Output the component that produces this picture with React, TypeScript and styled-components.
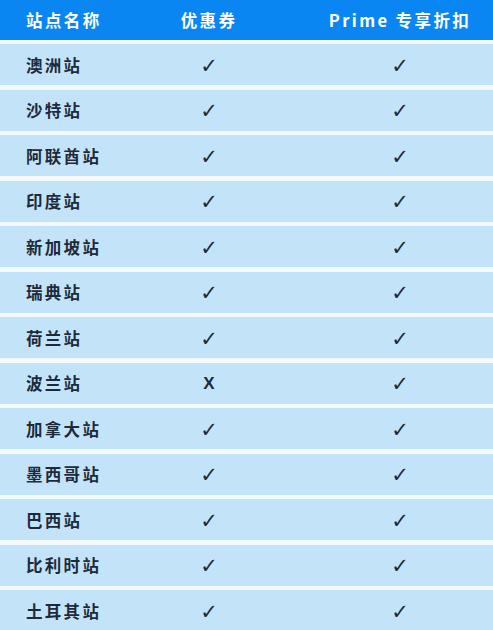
import React from "react";
import styled, { createGlobalStyle } from "styled-components";

const Global = createGlobalStyle`
  html, body { margin: 0; padding: 0; background: #f3f9fe; }
  body { font-family: "Noto Sans CJK SC", "Noto Sans", sans-serif; }
`;

const Table = styled.div`
  width: 493px;
  display: flex;
  flex-direction: column;
  gap: 4.5px;
  background: #f3f9fe;
`;

const HeaderRow = styled.div`
  display: grid;
  grid-template-columns: 111px 196px 1fr;
  align-items: center;
  height: 39.5px;
  background: #0a86f2;
  color: #ffffff;
  font-weight: 700;
  font-size: 16.5px;
  letter-spacing: 2.4px;
`;

const Row = styled.div`
  display: grid;
  grid-template-columns: 111px 196px 1fr;
  align-items: center;
  height: 41px;
  background: #c3e4f8;
  color: #1d2a3a;
`;

const NameCell = styled.div`
  padding-left: 26px;
  font-weight: 700;
  font-size: 16.5px;
  letter-spacing: 2.3px;
  white-space: nowrap;
`;

const HeadCell = styled.div<{ $align?: string }>`
  text-align: ${(p) => p.$align || "center"};
  padding-left: ${(p) => (p.$align === "left" ? "26px" : "0")};
  white-space: nowrap;
  line-height: 1;
`;

const Mark = styled.div<{ $no?: boolean }>`
  text-align: center;
  font-family: ${(p) => (p.$no ? '"Liberation Sans", sans-serif' : '"DejaVu Sans", sans-serif')};
  font-weight: ${(p) => (p.$no ? 700 : 400)};
  font-size: ${(p) => (p.$no ? "17px" : "21px")};
  padding-top: ${(p) => (p.$no ? "1px" : "3px")};
  color: #1d2a3a;
  line-height: 1;
`;

const rows: [string, boolean, boolean][] = [
  ["澳洲站", true, true],
  ["沙特站", true, true],
  ["阿联酋站", true, true],
  ["印度站", true, true],
  ["新加坡站", true, true],
  ["瑞典站", true, true],
  ["荷兰站", true, true],
  ["波兰站", false, true],
  ["加拿大站", true, true],
  ["墨西哥站", true, true],
  ["巴西站", true, true],
  ["比利时站", true, true],
  ["土耳其站", true, true],
];

export default function App() {
  return (
    <>
      <Global />
      <Table>
        <HeaderRow>
          <HeadCell $align="left">站点名称</HeadCell>
          <HeadCell>优惠券</HeadCell>
          <HeadCell>Prime 专享折扣</HeadCell>
        </HeaderRow>
        {rows.map(([name, a, b]) => (
          <Row key={name}>
            <NameCell>{name}</NameCell>
            <Mark $no={!a}>{a ? "✓" : "X"}</Mark>
            <Mark $no={!b}>{b ? "✓" : "X"}</Mark>
          </Row>
        ))}
      </Table>
    </>
  );
}
